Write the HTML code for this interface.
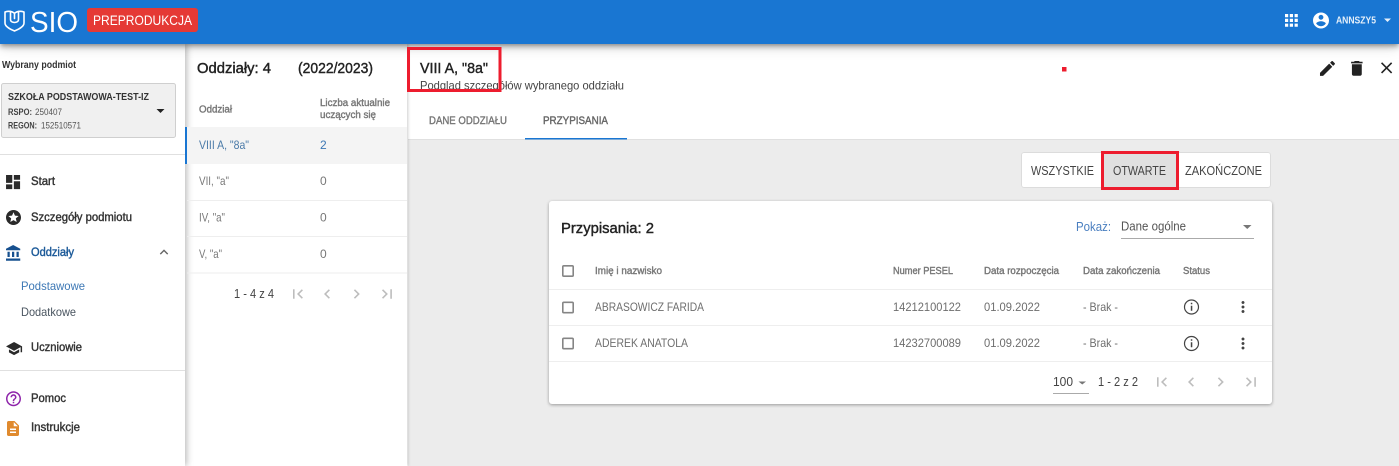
<!DOCTYPE html>
<html lang="pl"><head><meta charset="utf-8"><title>SIO</title>
<style>
html,body{margin:0;padding:0;width:1399px;height:466px;overflow:hidden;background:#fff}
.b{position:absolute}
svg{position:absolute;left:0;top:0}
text{font-family:"Liberation Sans",sans-serif;white-space:pre}
.m{stroke-width:.4;paint-order:stroke}
</style></head><body>
<div class="b" style="left:408px;top:139px;width:991px;height:327px;background:#ececec"></div>
<div class="b" style="left:408px;top:44px;width:991px;height:96px;background:#fff;border-bottom:1px solid #e0e0e0;box-sizing:border-box"></div>
<div class="b" style="left:185px;top:44px;width:222px;height:422px;background:#fff;box-shadow:1px 0 3px rgba(0,0,0,.2)"></div>
<div class="b" style="left:0;top:44px;width:185px;height:422px;background:#fff;box-shadow:2px 0 6px rgba(0,0,0,.26)"></div>
<div class="b" style="left:0;top:0;width:1399px;height:44px;background:#1976d2;box-shadow:0 2px 4px -1px rgba(0,0,0,.3),0 4px 5px rgba(0,0,0,.16),0 2px 14px rgba(0,0,0,.16)"></div>
<div class="b" style="left:1021px;top:152px;width:250px;height:36px;background:#fff;border-radius:3px;box-shadow:inset 0 0 0 1px #dcdcdc"></div>
<div class="b" style="left:549px;top:201px;width:723px;height:203px;background:#fff;border-radius:3px;box-shadow:0 1px 3px rgba(0,0,0,.35)"></div>
<svg width="1399" height="466" viewBox="0 0 1399 466" xmlns="http://www.w3.org/2000/svg">
<!-- header -->
<g fill="none" stroke="#fff" stroke-width="1.6" stroke-linejoin="round" stroke-linecap="round">
<path d="M5 12C9 10.700 12 11.300 14.500 13.300C17 11.300 20 10.700 24 12V23C24 27 18 29.500 14.500 31C11 29.500 5 27 5 23Z"/>
<path d="M10.500 11.500V19.500C10.500 23.500 18.500 23.500 18.500 19.500V11.500M14.500 13.500V18.500"/>
</g>
<text x="30" y="32" font-size="29" fill="#fff" textLength="48" lengthAdjust="spacingAndGlyphs">SIO</text>
<rect x="87" y="8" width="111" height="24" rx="3" fill="#e53935"/>
<text x="93" y="25" font-size="14" fill="#fff" textLength="99" lengthAdjust="spacingAndGlyphs">PREPRODUKCJA</text>
<path fill="#fff" transform="translate(1281.800 10.800) scale(.8)" d="M4 8h4V4H4v4zm6 12h4v-4h-4v4zm-6 0h4v-4H4v4zm0-6h4v-4H4v4zm6 0h4v-4h-4v4zm6-10v4h4V4h-4zm-6 4h4V4h-4v4zm6 6h4v-4h-4v4zm0 6h4v-4h-4v4z"/>
<path fill="#fff" transform="translate(1311.400 10.900) scale(.8)" d="M12 2C6.480 2 2 6.480 2 12s4.480 10 10 10 10-4.480 10-10S17.520 2 12 2zm0 3c1.660 0 3 1.340 3 3s-1.340 3-3 3-3-1.340-3-3 1.340-3 3-3zm0 14.200c-2.500 0-4.710-1.280-6-3.220.03-1.990 4-3.080 6-3.080 1.990 0 5.970 1.090 6 3.080-1.290 1.940-3.500 3.220-6 3.220z"/>
<text x="1336" y="23.500" font-size="10" font-weight="bold" fill="#e6f0fa" textLength="40" lengthAdjust="spacingAndGlyphs">ANNSZY5</text>
<path fill="#e6f0fa" d="M1384 18.500h7l-3.500 3.500z"/>

<!-- sidebar -->
<text x="2" y="68" font-size="10" font-weight="bold" fill="#333" textLength="74" lengthAdjust="spacingAndGlyphs">Wybrany podmiot</text>
<rect x="1.500" y="83.500" width="174" height="54" rx="2" fill="#f0f0f0" stroke="#cfcfcf"/>
<text x="8" y="100" font-size="10.500" font-weight="bold" fill="#333" textLength="141" lengthAdjust="spacingAndGlyphs">SZKOŁA PODSTAWOWA-TEST-IZ</text>
<text x="8" y="115" font-size="9" font-weight="bold" fill="#444" textLength="24" lengthAdjust="spacingAndGlyphs">RSPO:</text>
<text x="35" y="115" font-size="9.500" fill="#555" textLength="27" lengthAdjust="spacingAndGlyphs">250407</text>
<text x="8" y="128.500" font-size="9" font-weight="bold" fill="#444" textLength="29" lengthAdjust="spacingAndGlyphs">REGON:</text>
<text x="41" y="128.500" font-size="9.500" fill="#555" textLength="40" lengthAdjust="spacingAndGlyphs">152510571</text>
<path fill="#222" d="M156.500 109h8l-4 4z"/>
<rect x="0" y="154" width="185" height="1" fill="#e0e0e0"/>
<path fill="#2a2a2a" transform="translate(3.700 172.700) scale(.78)" d="M3 13h8V3H3v10zm0 8h8v-6H3v6zm10 0h8V11h-8v10zm0-18v6h8V3h-8z"/>
<text x="31" y="185" font-size="11.500" fill="#333" class="m" stroke="#333" textLength="24" lengthAdjust="spacingAndGlyphs">Start</text>
<path fill="#2a2a2a" transform="translate(4.500 208.500) scale(.75)" d="M11.990 2C6.470 2 2 6.480 2 12s4.470 10 9.990 10C17.520 22 22 17.520 22 12S17.520 2 11.990 2zm4.240 16L12 15.450 7.770 18l1.120-4.810-3.730-3.230 4.920-.42L12 5l1.920 4.530 4.920.42-3.730 3.230L16.230 18z"/>
<text x="31" y="221" font-size="11.500" fill="#333" class="m" stroke="#333" textLength="101" lengthAdjust="spacingAndGlyphs">Szczegóły podmiotu</text>
<path fill="#17508f" transform="translate(4.500 244.200) scale(.75)" d="M4 10v7h3v-7H4zm6 0v7h3v-7h-3zM2 22h19v-3H2v3zm14-12v7h3v-7h-3zm-4.500-9L2 6v2h19V6l-9.500-5z"/>
<text x="31" y="256" font-size="11.500" fill="#1c5a99" class="m" stroke="#1c5a99" textLength="43" lengthAdjust="spacingAndGlyphs">Oddziały</text>
<path fill="#666" transform="translate(155.600 243.800) scale(.7)" d="M12 8l-6 6 1.410 1.410L12 10.830l4.590 4.580L18 14z"/>
<text x="21" y="290" font-size="12" fill="#3d78b5" textLength="64" lengthAdjust="spacingAndGlyphs">Podstawowe</text>
<text x="21" y="316" font-size="12" fill="#4a5560" textLength="55" lengthAdjust="spacingAndGlyphs">Dodatkowe</text>
<path fill="#2a2a2a" transform="translate(5.300 339.800) scale(.73)" d="M5 13.180v4L12 21l7-3.820v-4L12 17l-7-3.820zM12 3L1 9l11 6 9-4.910V17h2V9L12 3z"/>
<text x="31" y="351" font-size="11.500" fill="#333" class="m" stroke="#333" textLength="51" lengthAdjust="spacingAndGlyphs">Uczniowie</text>
<rect x="0" y="370" width="185" height="1" fill="#e0e0e0"/>
<path fill="#8e24aa" transform="translate(4.500 389.700) scale(.75)" d="M11 18h2v-2h-2v2zm1-16C6.480 2 2 6.480 2 12s4.480 10 10 10 10-4.480 10-10S17.520 2 12 2zm0 18c-4.410 0-8-3.590-8-8s3.590-8 8-8 8 3.590 8 8-3.590 8-8 8zm0-14c-2.210 0-4 1.790-4 4h2c0-1.100.9-2 2-2s2 .9 2 2c0 2-3 1.750-3 5h2c0-2.250 3-2.500 3-5 0-2.210-1.790-4-4-4z"/>
<text x="31" y="402" font-size="11.500" fill="#333" class="m" stroke="#333" textLength="35" lengthAdjust="spacingAndGlyphs">Pomoc</text>
<path fill="#e08a2e" transform="translate(4 419.500) scale(.75)" d="M14 2H6c-1.100 0-1.990.9-1.990 2L4 20c0 1.100.89 2 1.990 2H18c1.100 0 2-.9 2-2V8l-6-6zm2 16H8v-2h8v2zm0-4H8v-2h8v2zm-3-5V3.500L18.500 9H13z"/>
<text x="31" y="431" font-size="11.500" fill="#333" class="m" stroke="#333" textLength="49" lengthAdjust="spacingAndGlyphs">Instrukcje</text>

<!-- list panel -->
<text x="197" y="73" font-size="14.500" fill="#222" class="m" stroke="#222" textLength="74" lengthAdjust="spacingAndGlyphs">Oddziały: 4</text>
<text x="298" y="73" font-size="14.500" fill="#222" class="m" stroke="#222" textLength="75" lengthAdjust="spacingAndGlyphs">(2022/2023)</text>
<text x="199" y="112.500" font-size="10" fill="#777" class="m" stroke="#777" textLength="33" lengthAdjust="spacingAndGlyphs">Oddział</text>
<text x="320" y="106" font-size="10" fill="#777" class="m" stroke="#777" textLength="70" lengthAdjust="spacingAndGlyphs">Liczba aktualnie</text>
<text x="320" y="118" font-size="10" fill="#777" class="m" stroke="#777" textLength="56" lengthAdjust="spacingAndGlyphs">uczących się</text>
<rect x="185" y="127" width="222" height="37" fill="#f4f4f4"/>
<rect x="185" y="127" width="2" height="37" fill="#1976d2"/>
<text x="199" y="149" font-size="12" fill="#4a7aa8" textLength="50" lengthAdjust="spacingAndGlyphs">VIII A, "8a"</text>
<text x="320" y="149" font-size="12" fill="#3d78b5">2</text>
<text x="199" y="185" font-size="12" fill="#777" textLength="30" lengthAdjust="spacingAndGlyphs">VII, "a"</text>
<text x="320" y="185" font-size="12" fill="#777">0</text>
<rect x="187" y="200" width="220" height="1" fill="#eeeeee"/>
<text x="199" y="221.500" font-size="12" fill="#777" textLength="26" lengthAdjust="spacingAndGlyphs">IV, "a"</text>
<text x="320" y="221.500" font-size="12" fill="#777">0</text>
<rect x="187" y="236" width="220" height="1" fill="#eeeeee"/>
<text x="199" y="258" font-size="12" fill="#777" textLength="23" lengthAdjust="spacingAndGlyphs">V, "a"</text>
<text x="320" y="258" font-size="12" fill="#777">0</text>
<rect x="187" y="272.500" width="220" height="1" fill="#eeeeee"/>
<text x="234" y="298" font-size="12.500" fill="#444" textLength="40" lengthAdjust="spacingAndGlyphs">1 - 4 z 4</text>
<g fill="#bdbdbd">
<path transform="translate(288.200 284.400) scale(.8)" d="M18.410 16.590L13.820 12l4.590-4.590L17 6l-6 6 6 6zM6 6h2v12H6z"/>
<path transform="translate(317.600 284.400) scale(.8)" d="M15.410 7.410L14 6l-6 6 6 6 1.410-1.410L10.830 12z"/>
<path transform="translate(347 284.400) scale(.8)" d="M10 6L8.590 7.410 13.170 12l-4.580 4.590L10 18l6-6z"/>
<path transform="translate(377.500 284.400) scale(.8)" d="M5.590 7.410L10.180 12l-4.590 4.590L7 18l6-6-6-6zM16 6h2v12h-2z"/>
</g>

<!-- detail header -->
<text x="420" y="73" font-size="14.500" fill="#222" class="m" stroke="#222" textLength="68" lengthAdjust="spacingAndGlyphs">VIII A, "8a"</text>
<text x="420" y="89.500" font-size="12" fill="#444" textLength="204" lengthAdjust="spacingAndGlyphs">Podgląd szczegółów wybranego oddziału</text>
<rect x="408.500" y="48.500" width="91.500" height="42" fill="none" stroke="#ed1c2e" stroke-width="3"/>
<rect x="1062" y="67" width="4.500" height="4.500" fill="#ed1c2e"/>
<path fill="#222" transform="translate(1317.500 58.500) scale(.83)" d="M3 17.250V21h3.750L17.810 9.940l-3.750-3.750L3 17.250zM20.710 7.040c.39-.39.39-1.020 0-1.410l-2.340-2.340c-.39-.39-1.020-.39-1.410 0l-1.830 1.830 3.750 3.750 1.830-1.830z"/>
<path fill="#222" transform="translate(1347 58.500) scale(.82)" d="M6 19c0 1.100.9 2 2 2h8c1.100 0 2-.9 2-2V7H6v12zM19 4h-3.500l-1-1h-5l-1 1H5v2h14V4z"/>
<path fill="#222" transform="translate(1377 58.300) scale(.8)" d="M19 6.410L17.590 5 12 10.590 6.410 5 5 6.410 10.590 12 5 17.590 6.410 19 12 13.410 17.590 19 19 17.590 13.410 12z"/>
<text x="429" y="124" font-size="11" fill="#777" class="m" stroke="#777" textLength="78" lengthAdjust="spacingAndGlyphs">DANE ODDZIAŁU</text>
<text x="543" y="124" font-size="11" fill="#666" class="m" stroke="#666" textLength="65" lengthAdjust="spacingAndGlyphs">PRZYPISANIA</text>
<rect x="525" y="138" width="102" height="1.500" fill="#1976d2"/>

<!-- buttons -->
<rect x="1102.500" y="152.500" width="75" height="36" fill="#e0e0e0" stroke="#ed1c2e" stroke-width="3"/>
<text x="1031" y="175" font-size="13" fill="#444" textLength="63" lengthAdjust="spacingAndGlyphs">WSZYSTKIE</text>
<text x="1113" y="175" font-size="13" fill="#444" textLength="53" lengthAdjust="spacingAndGlyphs">OTWARTE</text>
<text x="1185" y="175" font-size="13" fill="#444" textLength="77" lengthAdjust="spacingAndGlyphs">ZAKOŃCZONE</text>

<!-- card -->
<text x="561" y="233" font-size="14.500" fill="#222" class="m" stroke="#222" textLength="93" lengthAdjust="spacingAndGlyphs">Przypisania: 2</text>
<text x="1076" y="231" font-size="12.500" fill="#4a7fc0" textLength="35" lengthAdjust="spacingAndGlyphs">Pokaż:</text>
<text x="1121" y="230.500" font-size="12.500" fill="#555" textLength="65" lengthAdjust="spacingAndGlyphs">Dane ogólne</text>
<path fill="#777" d="M1243 225h8.500l-4.250 4z"/>
<rect x="1121" y="238" width="133" height="1" fill="#aaa"/>
<g fill="none" stroke="#858585" stroke-width="1.600">
<rect x="562.800" y="265.800" width="10.400" height="10.400" rx="1"/>
<rect x="562.800" y="302.300" width="10.400" height="10.400" rx="1"/>
<rect x="562.800" y="338.300" width="10.400" height="10.400" rx="1"/>
</g>
<g font-size="10" fill="#777" class="m" stroke="#777">
<text x="595" y="274" textLength="67" lengthAdjust="spacingAndGlyphs">Imię i nazwisko</text>
<text x="893" y="274" textLength="60" lengthAdjust="spacingAndGlyphs">Numer PESEL</text>
<text x="984" y="274" textLength="75" lengthAdjust="spacingAndGlyphs">Data rozpoczęcia</text>
<text x="1083" y="274" textLength="77" lengthAdjust="spacingAndGlyphs">Data zakończenia</text>
<text x="1183" y="274" textLength="27" lengthAdjust="spacingAndGlyphs">Status</text>
</g>
<rect x="549" y="289" width="723" height="1" fill="#eeeeee"/>
<rect x="549" y="325" width="723" height="1" fill="#eeeeee"/>
<rect x="549" y="361" width="723" height="1" fill="#eeeeee"/>
<g font-size="12" fill="#6e6e6e">
<text x="595" y="311" textLength="109" lengthAdjust="spacingAndGlyphs">ABRASOWICZ FARIDA</text>
<text x="893" y="311" textLength="68" lengthAdjust="spacingAndGlyphs">14212100122</text>
<text x="984" y="311" textLength="56" lengthAdjust="spacingAndGlyphs">01.09.2022</text>
<text x="1083" y="311" textLength="35" lengthAdjust="spacingAndGlyphs">- Brak -</text>
<text x="595" y="347" textLength="93" lengthAdjust="spacingAndGlyphs">ADEREK ANATOLA</text>
<text x="893" y="347" textLength="68" lengthAdjust="spacingAndGlyphs">14232700089</text>
<text x="984" y="347" textLength="56" lengthAdjust="spacingAndGlyphs">01.09.2022</text>
<text x="1083" y="347" textLength="35" lengthAdjust="spacingAndGlyphs">- Brak -</text>
</g>
<g fill="none" stroke="#444" stroke-width="1.200">
<circle cx="1191.500" cy="307" r="7"/>
<circle cx="1191.500" cy="343.500" r="7"/>
</g>
<g fill="#444">
<path d="M1190.800 302.800h1.500v1.500h-1.500zM1190.800 305.800h1.500v5h-1.500zM1190.800 339.300h1.500v1.500h-1.500zM1190.800 342.300h1.500v5h-1.500z"/>
<path transform="translate(1234 298) scale(.75)" d="M12 8c1.100 0 2-.9 2-2s-.9-2-2-2-2 .9-2 2 .9 2 2 2zm0 2c-1.100 0-2 .9-2 2s.9 2 2 2 2-.9 2-2-.9-2-2-2zm0 6c-1.100 0-2 .9-2 2s.9 2 2 2 2-.9 2-2-.9-2-2-2z"/>
<path transform="translate(1234 334.500) scale(.75)" d="M12 8c1.100 0 2-.9 2-2s-.9-2-2-2-2 .9-2 2 .9 2 2 2zm0 2c-1.100 0-2 .9-2 2s.9 2 2 2 2-.9 2-2-.9-2-2-2zm0 6c-1.100 0-2 .9-2 2s.9 2 2 2 2-.9 2-2-.9-2-2-2z"/>
</g>
<text x="1053" y="386" font-size="12.500" fill="#444" textLength="20" lengthAdjust="spacingAndGlyphs">100</text>
<path fill="#777" d="M1078.500 381.500h7.500l-3.750 3z"/>
<rect x="1053" y="393" width="36" height="1" fill="#aaa"/>
<text x="1098" y="386" font-size="12.500" fill="#444" textLength="40" lengthAdjust="spacingAndGlyphs">1 - 2 z 2</text>
<g fill="#bdbdbd">
<path transform="translate(1152.200 372.400) scale(.8)" d="M18.410 16.590L13.820 12l4.590-4.590L17 6l-6 6 6 6zM6 6h2v12H6z"/>
<path transform="translate(1181.600 372.400) scale(.8)" d="M15.410 7.410L14 6l-6 6 6 6 1.410-1.410L10.830 12z"/>
<path transform="translate(1211 372.400) scale(.8)" d="M10 6L8.590 7.410 13.170 12l-4.580 4.590L10 18l6-6z"/>
<path transform="translate(1241.500 372.400) scale(.8)" d="M5.590 7.410L10.180 12l-4.590 4.590L7 18l6-6-6-6zM16 6h2v12h-2z"/>
</g>
</svg>
</body></html>
